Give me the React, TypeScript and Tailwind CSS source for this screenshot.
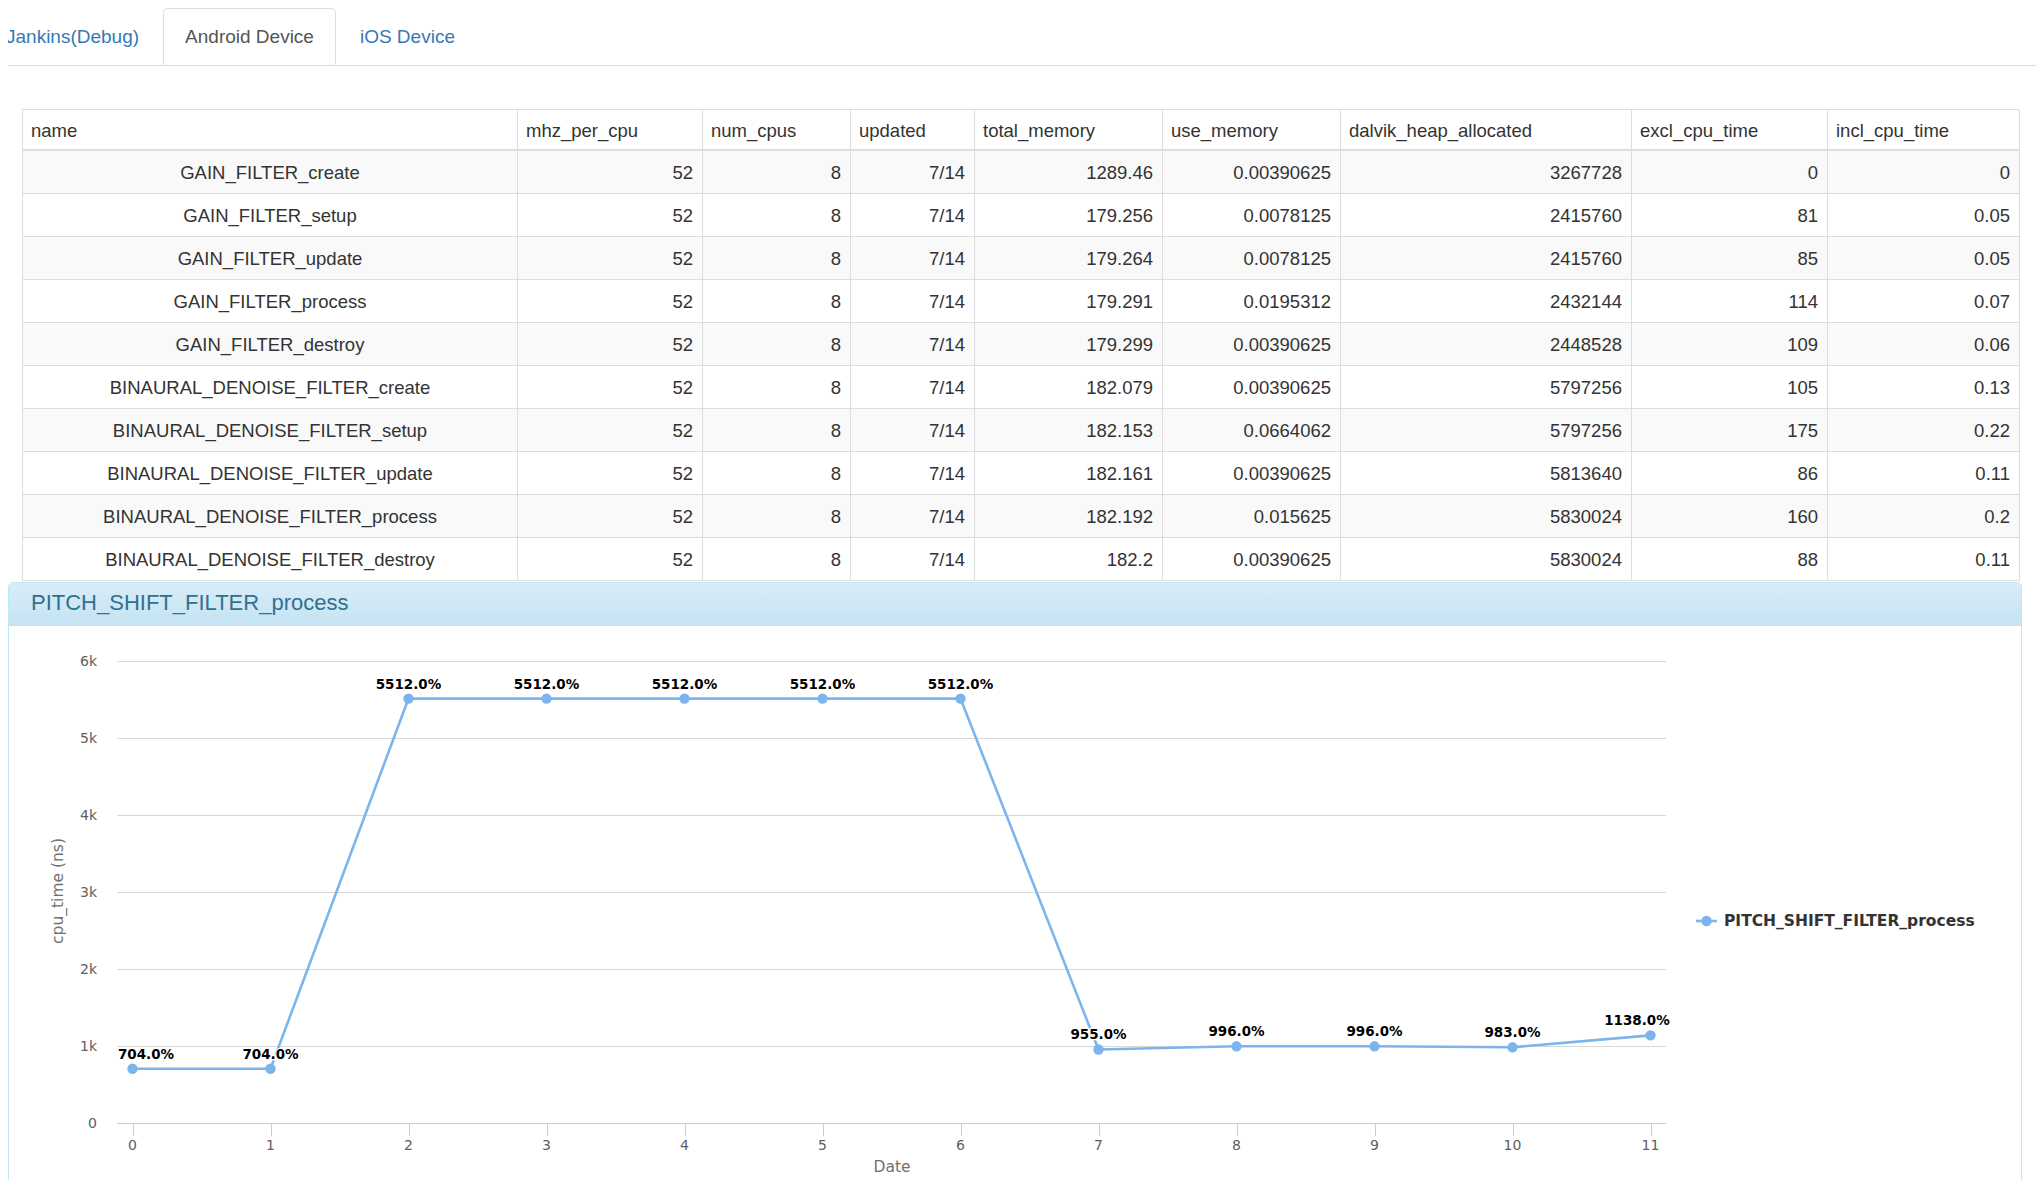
import React from 'react'

const HEAD = ['name', 'mhz_per_cpu', 'num_cpus', 'updated', 'total_memory', 'use_memory', 'dalvik_heap_allocated', 'excl_cpu_time', 'incl_cpu_time']

const WIDTHS = ['w-[495px]', 'w-[185px]', 'w-[148px]', 'w-[124px]', 'w-[188px]', 'w-[178px]', 'w-[291px]', 'w-[196px]', 'w-[192px]']

const ROWS = [
  ['GAIN_FILTER_create', '52', '8', '7/14', '1289.46', '0.00390625', '3267728', '0', '0'],
  ['GAIN_FILTER_setup', '52', '8', '7/14', '179.256', '0.0078125', '2415760', '81', '0.05'],
  ['GAIN_FILTER_update', '52', '8', '7/14', '179.264', '0.0078125', '2415760', '85', '0.05'],
  ['GAIN_FILTER_process', '52', '8', '7/14', '179.291', '0.0195312', '2432144', '114', '0.07'],
  ['GAIN_FILTER_destroy', '52', '8', '7/14', '179.299', '0.00390625', '2448528', '109', '0.06'],
  ['BINAURAL_DENOISE_FILTER_create', '52', '8', '7/14', '182.079', '0.00390625', '5797256', '105', '0.13'],
  ['BINAURAL_DENOISE_FILTER_setup', '52', '8', '7/14', '182.153', '0.0664062', '5797256', '175', '0.22'],
  ['BINAURAL_DENOISE_FILTER_update', '52', '8', '7/14', '182.161', '0.00390625', '5813640', '86', '0.11'],
  ['BINAURAL_DENOISE_FILTER_process', '52', '8', '7/14', '182.192', '0.015625', '5830024', '160', '0.2'],
  ['BINAURAL_DENOISE_FILTER_destroy', '52', '8', '7/14', '182.2', '0.00390625', '5830024', '88', '0.11'],
]

const VALUES = [704, 704, 5512, 5512, 5512, 5512, 5512, 955, 996, 996, 983, 1138]

const px = (i: number) => 132.5 + 138 * i
const py = (v: number) => 1123 - v * 0.077

function Chart() {
  const pts = VALUES.map((v, i) => `${px(i)},${py(v)}`).join(' ')
  return (
    <svg width="2012" height="554" viewBox="9 626 2012 554" className="block" style={{ fontFamily: '"DejaVu Sans", Verdana, sans-serif' }}>
      {/* grid */}
      {[1, 2, 3, 4, 5, 6].map(k => (
        <line key={k} x1="117" x2="1666" y1={1123 - 77 * k + 0.5} y2={1123 - 77 * k + 0.5} stroke="#d8d8d8" strokeWidth="1" />
      ))}
      <line x1="117" x2="1666" y1="1123.5" y2="1123.5" stroke="#c0d0e0" strokeWidth="1" />
      {[0, 1, 2, 3, 4, 5, 6].map(k => (
        <text key={k} x="97" y={1123 - 77 * k + 5} textAnchor="end" fontSize="14" fill="#606060">
          {k === 0 ? '0' : `${k}k`}
        </text>
      ))}
      {VALUES.map((_, i) => (
        <g key={i}>
          <line x1={Math.round(px(i)) + 0.5} x2={Math.round(px(i)) + 0.5} y1="1123" y2="1136" stroke="#c0d0e0" strokeWidth="1" />
          <text x={px(i)} y="1150" textAnchor="middle" fontSize="14" fill="#606060">{i}</text>
        </g>
      ))}
      <text transform="translate(63 891) rotate(-90)" textAnchor="middle" fontSize="15.5" fill="#707070">cpu_time (ns)</text>
      <text x="892" y="1172" textAnchor="middle" fontSize="15.5" fill="#707070">Date</text>

      {/* series */}
      <polyline points={pts} fill="none" stroke="#7cb5ec" strokeWidth="2.6" strokeLinejoin="round" />
      {VALUES.map((v, i) => (
        <circle key={i} cx={px(i)} cy={py(v)} r="5.2" fill="#7cb5ec" />
      ))}
      {VALUES.map((v, i) => {
        const cx = i === 0 ? 146 : i === 11 ? 1637 : px(i)
        return (
          <text key={i} x={cx} y={py(v) - 10} textAnchor="middle" fontSize="13.5" fontWeight="bold" fill="#000"
            stroke="#fff" strokeWidth="2.5" strokeLinejoin="round" style={{ paintOrder: 'stroke' }}>
            {v.toFixed(1)}%
          </text>
        )
      })}

      {/* legend */}
      <line x1="1696" x2="1717" y1="921" y2="921" stroke="#7cb5ec" strokeWidth="2.6" />
      <circle cx="1706.5" cy="921" r="5.2" fill="#7cb5ec" />
      <text x="1724" y="926" fontSize="15.5" fontWeight="bold" fill="#333">PITCH_SHIFT_FILTER_process</text>
    </svg>
  )
}

export default function App() {
  return (
    <div className="w-[2036px] h-[1180px] overflow-hidden bg-white text-[#333] font-['Liberation_Sans',Arial,sans-serif]">
      {/* ── Tabs ── */}
      <div className="ml-[8px] h-[66px] flex items-end border-b border-[#ddd] text-[19px] overflow-hidden">
        <div className="-ml-[24px] mr-[2px] h-[57px] pt-[2px] px-[21px] border border-transparent flex items-center text-[#337ab7]">Jankins(Debug)</div>
        <div className="mr-[2px] h-[57px] pt-[2px] px-[21px] border border-[#ddd] border-b-white rounded-t-[5px] bg-white flex items-center text-[#555]">Android Device</div>
        <div className="mr-[2px] h-[57px] pt-[2px] px-[21px] border border-transparent flex items-center text-[#337ab7]">iOS Device</div>
      </div>

      {/* ── Table ── */}
      <div className="mt-[43px] ml-[22px] w-[1997px] border-l border-t border-[#ddd] text-[18.5px]">
        <div className="flex">
          {HEAD.map((h, i) => (
            <div key={h} className={`${WIDTHS[i]} h-[41px] shrink-0 border-r border-b-2 border-[#ddd] px-[8px] pt-[2px] flex items-center`}>{h}</div>
          ))}
        </div>
        {ROWS.map((r, ri) => (
          <div key={ri} className={`flex ${ri % 2 === 0 ? 'bg-[#f9f9f9]' : 'bg-white'}`}>
            {r.map((c, ci) => (
              <div key={ci} className={`${WIDTHS[ci]} h-[43px] shrink-0 border-r border-b border-[#ddd] px-[9px] pt-[2px] flex items-center ${ci === 0 ? 'justify-center' : 'justify-end'}`}>{c}</div>
            ))}
          </div>
        ))}
      </div>

      {/* ── Chart panel ── */}
      <div className="mt-[1px] ml-[8px] w-[2014px] border border-[#bce8f1] rounded-t-[5px] overflow-hidden">
        <div className="h-[43px] border-b border-[#bce8f1] bg-linear-to-b from-[#d9edf7] to-[#c4e3f3] pl-[22px] pb-[4px] flex items-center text-[22px] text-[#31708f]">
          PITCH_SHIFT_FILTER_process
        </div>
        <Chart />
      </div>
    </div>
  )
}
